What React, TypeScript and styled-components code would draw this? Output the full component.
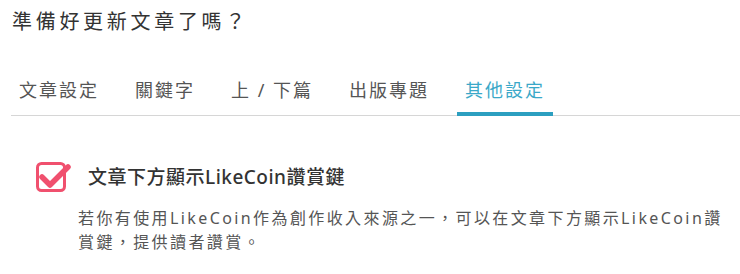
import styled, { createGlobalStyle } from 'styled-components';

const GlobalStyle = createGlobalStyle`
    body {
        margin: 0;
        background: #ffffff;
        font-family: "Noto Sans", "Noto Sans CJK TC", sans-serif;
    }
`;

const Page = styled.div`
    width: 740px;
    height: 274px;
    overflow: hidden;
    padding-top: 8px;
    box-sizing: border-box;
`;

const Title = styled.h2`
    margin: 0 0 0 12px;
    font-size: 20px;
    line-height: 28px;
    font-weight: 400;
    letter-spacing: 3.7px;
    color: #333333;
`;

const TabBar = styled.div`
    display: flex;
    gap: 20px;
    margin: 41px 0 0 11px;
    border-bottom: 1px solid #d6d6d6;
`;

const Tab = styled.div<{ $active?: boolean }>`
    padding: 0 8px 9px;
    margin-bottom: -1px;
    font-size: 18px;
    line-height: 26px;
    letter-spacing: 2px;
    color: ${(p) => (p.$active ? '#3aa8c8' : '#555555')};
    border-bottom: 4px solid ${(p) => (p.$active ? '#2c9fc0' : 'transparent')};
`;

const Option = styled.div`
    display: flex;
    flex-direction: column;
    margin: 45px 0 0 36px;
`;

const OptionRow = styled.div`
    display: flex;
    align-items: center;
    gap: 17px;
`;

const OptionLabel = styled.span`
    font-size: 19px;
    line-height: 30px;
    font-weight: 500;
    letter-spacing: 0.5px;
    color: #333333;
`;

const OptionDesc = styled.p`
    margin: 13px 0 0 42px;
    width: 655px;
    font-size: 16px;
    line-height: 24px;
    letter-spacing: 2.4px;
    color: #555555;
`;

function CheckIcon() {
    return (
        <svg width="35" height="32" viewBox="0 0 35 32">
            <rect x="1.5" y="2.5" width="27" height="27" rx="4" fill="none" stroke="#f0506e" strokeWidth="3" />
            <path d="M6 16 L14 24 L32 6" fill="none" stroke="#f0506e" strokeWidth="5.5" strokeLinecap="round" strokeLinejoin="round" />
        </svg>
    );
}

const tabs = ['文章設定', '關鍵字', '上 / 下篇', '出版專題', '其他設定'];

function App() {
    return (
        <Page>
            <GlobalStyle />
            <Title>準備好更新文章了嗎？</Title>
            <TabBar>
                {tabs.map((t, i) => (
                    <Tab key={t} $active={i === tabs.length - 1}>{t}</Tab>
                ))}
            </TabBar>
            <Option>
                <OptionRow>
                    <CheckIcon />
                    <OptionLabel>文章下方顯示LikeCoin讚賞鍵</OptionLabel>
                </OptionRow>
                <OptionDesc>
                    若你有使用LikeCoin作為創作收入來源之一，可以在文章下方顯示LikeCoin讚賞鍵，提供讀者讚賞。
                </OptionDesc>
            </Option>
        </Page>
    );
}

export default App;
